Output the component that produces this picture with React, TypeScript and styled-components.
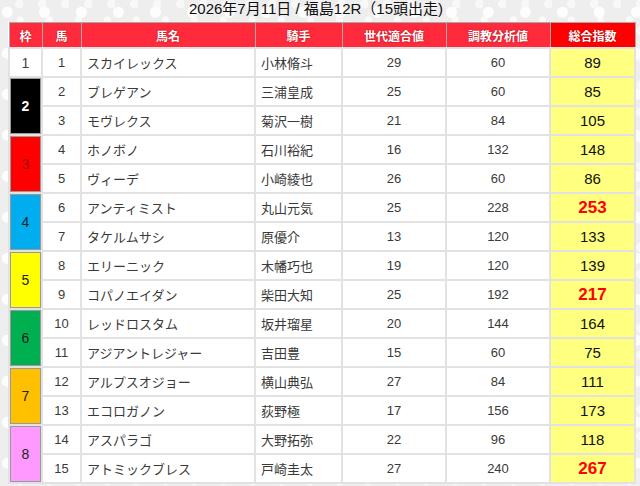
import React from "react";
import styled, { createGlobalStyle } from "styled-components";

const GlobalStyle = createGlobalStyle`
  html, body {
    margin: 0;
    padding: 0;
    background-color: #eeeeee;
    background-image:
      radial-gradient(circle at 20% 30%, rgba(255,255,255,0.9) 0 5px, transparent 6px),
      radial-gradient(circle at 70% 60%, rgba(255,255,255,0.7) 0 3px, transparent 4px),
      radial-gradient(circle at 45% 85%, rgba(255,255,255,0.8) 0 7px, transparent 8px),
      radial-gradient(circle at 85% 15%, rgba(255,255,255,0.6) 0 4px, transparent 5px);
    background-size: 37px 41px, 29px 33px, 53px 47px, 23px 27px;
    font-family: "Liberation Sans", "Noto Sans CJK JP", sans-serif;
  }
`;

type Horse = {
  frame: number;
  no: number;
  name: string;
  jockey: string;
  gen: number;
  train: number;
  total: number;
};

const horses: Horse[] = [
  { frame: 1, no: 1, name: "スカイレックス", jockey: "小林脩斗", gen: 29, train: 60, total: 89 },
  { frame: 2, no: 2, name: "ブレゲアン", jockey: "三浦皇成", gen: 25, train: 60, total: 85 },
  { frame: 2, no: 3, name: "モヴレクス", jockey: "菊沢一樹", gen: 21, train: 84, total: 105 },
  { frame: 3, no: 4, name: "ホノボノ", jockey: "石川裕紀", gen: 16, train: 132, total: 148 },
  { frame: 3, no: 5, name: "ヴィーデ", jockey: "小崎綾也", gen: 26, train: 60, total: 86 },
  { frame: 4, no: 6, name: "アンティミスト", jockey: "丸山元気", gen: 25, train: 228, total: 253 },
  { frame: 4, no: 7, name: "タケルムサシ", jockey: "原優介", gen: 13, train: 120, total: 133 },
  { frame: 5, no: 8, name: "エリーニック", jockey: "木幡巧也", gen: 19, train: 120, total: 139 },
  { frame: 5, no: 9, name: "コパノエイダン", jockey: "柴田大知", gen: 25, train: 192, total: 217 },
  { frame: 6, no: 10, name: "レッドロスタム", jockey: "坂井瑠星", gen: 20, train: 144, total: 164 },
  { frame: 6, no: 11, name: "アジアントレジャー", jockey: "吉田豊", gen: 15, train: 60, total: 75 },
  { frame: 7, no: 12, name: "アルプスオジョー", jockey: "横山典弘", gen: 27, train: 84, total: 111 },
  { frame: 7, no: 13, name: "エコロガノン", jockey: "荻野極", gen: 17, train: 156, total: 173 },
  { frame: 8, no: 14, name: "アスパラゴ", jockey: "大野拓弥", gen: 22, train: 96, total: 118 },
  { frame: 8, no: 15, name: "アトミックブレス", jockey: "戸崎圭太", gen: 27, train: 240, total: 267 },
];

const frameColors: Record<number, { bg: string; fg: string; weight: number }> = {
  1: { bg: "#ffffff", fg: "#444444", weight: 400 },
  2: { bg: "#000000", fg: "#ffffff", weight: 700 },
  3: { bg: "#ff0000", fg: "#9a0f0f", weight: 400 },
  4: { bg: "#00aeef", fg: "#222222", weight: 400 },
  5: { bg: "#ffff00", fg: "#222222", weight: 400 },
  6: { bg: "#00b050", fg: "#222222", weight: 400 },
  7: { bg: "#ffc000", fg: "#222222", weight: 400 },
  8: { bg: "#ff99ff", fg: "#222222", weight: 400 },
};

const columns = [33, 39, 174, 87, 104, 104, 85];

const Page = styled.div`
  padding: 0 6px 0 8px;
  width: 626px;
`;

const Title = styled.h2`
  margin: -1px 0 0 0;
  height: 23px;
  line-height: 20px;
  text-align: center;
  font-size: 15px;
  font-weight: 400;
  color: #111;
  padding-right: 10px;
`;

const Table = styled.table`
  width: 626px;
  border-collapse: collapse;
  table-layout: fixed;
  background: #fff;
`;

const Col = styled.col<{ $w: number }>`
  width: ${(p) => p.$w}px;
`;

const HeadCell = styled.th<{ $strong?: boolean }>`
  height: 24px;
  padding: 0;
  background: ${(p) => (p.$strong ? "#ff0000" : "#ff2a3c")};
  color: #fff;
  font-size: 12px;
  font-weight: 700;
  text-shadow: 0 0 2px rgba(90, 0, 0, 0.6);
  border: 1px solid #a8a8a8;
  text-align: center;
  vertical-align: middle;
`;

const Cell = styled.td<{ $align?: "left" | "center" }>`
  height: 27px;
  padding: 0 0 0 ${(p) => (p.$align === "left" ? "5px" : "0")};
  border: 2px solid #e2e2e2;
  font-size: 13px;
  color: #3a3a3a;
  text-align: ${(p) => p.$align ?? "center"};
  vertical-align: middle;
  white-space: nowrap;
  overflow: hidden;
`;

const FrameCell = styled.td<{ $bg: string; $fg: string; $weight: number }>`
  padding: 0;
  background: ${(p) => p.$bg};
  color: ${(p) => p.$fg};
  font-weight: ${(p) => p.$weight};
  font-size: 14px;
  text-align: center;
  vertical-align: middle;
  border: 2px solid #e2e2e2;
  box-shadow: inset 0 0 0 1px ${(p) => (p.$bg === "#ffffff" ? "transparent" : "#9a9a9a")};
`;

const TotalCell = styled.td<{ $hot: boolean }>`
  padding: 0;
  background: #ffff80;
  border: 2px solid #e2e2e2;
  text-align: center;
  vertical-align: middle;
  font-size: ${(p) => (p.$hot ? "17px" : "15px")};
  font-weight: ${(p) => (p.$hot ? 700 : 400)};
  color: ${(p) => (p.$hot ? "#ff0000" : "#111")};
`;

export default function App() {
  return (
    <>
      <GlobalStyle />
      <Page>
        <Title>2026年7月11日 / 福島12R（15頭出走)</Title>
        <Table>
          <colgroup>
            {columns.map((w, i) => (
              <Col key={i} $w={w} />
            ))}
          </colgroup>
          <thead>
            <tr>
              <HeadCell>枠</HeadCell>
              <HeadCell>馬</HeadCell>
              <HeadCell>馬名</HeadCell>
              <HeadCell>騎手</HeadCell>
              <HeadCell>世代適合値</HeadCell>
              <HeadCell>調教分析値</HeadCell>
              <HeadCell $strong>総合指数</HeadCell>
            </tr>
          </thead>
          <tbody>
            {horses.map((h, i) => {
              const firstOfFrame = i === 0 || horses[i - 1].frame !== h.frame;
              const span = horses.filter((x) => x.frame === h.frame).length;
              const fc = frameColors[h.frame];
              return (
                <tr key={h.no}>
                  {firstOfFrame && (
                    <FrameCell rowSpan={span} $bg={fc.bg} $fg={fc.fg} $weight={fc.weight}>
                      {h.frame}
                    </FrameCell>
                  )}
                  <Cell>{h.no}</Cell>
                  <Cell $align="left">{h.name}</Cell>
                  <Cell $align="left">{h.jockey}</Cell>
                  <Cell>{h.gen}</Cell>
                  <Cell>{h.train}</Cell>
                  <TotalCell $hot={h.total >= 200}>{h.total}</TotalCell>
                </tr>
              );
            })}
          </tbody>
        </Table>
      </Page>
    </>
  );
}
